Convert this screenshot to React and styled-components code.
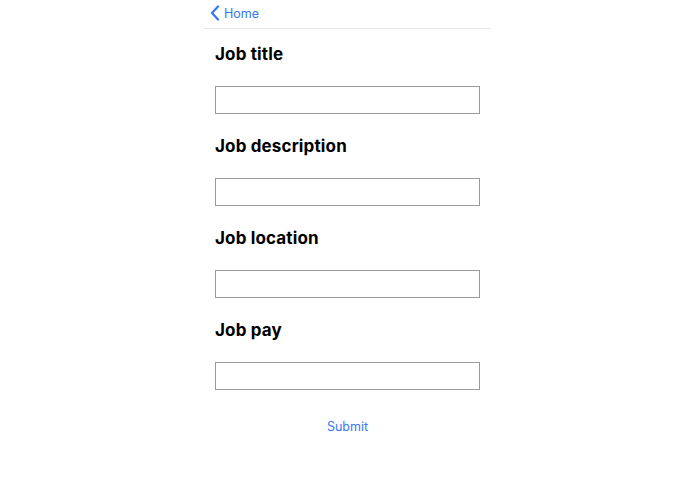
import React from "react";
import styled, { createGlobalStyle } from "styled-components";

const Global = createGlobalStyle`
  html, body { margin: 0; padding: 0; background: #fff; }
  body { font-family: Inter, "Noto Sans", sans-serif; }
`;

const Page = styled.div`
  display: flex;
  justify-content: center;
`;

const Panel = styled.div`
  width: 287px;
  display: flex;
  flex-direction: column;
`;

const Header = styled.div`
  height: 29px;
  box-sizing: border-box;
  border-bottom: 1px solid #e6e6e6;
  display: flex;
  align-items: center;
  padding: 0 0 2px 6px;
`;

const BackLink = styled.a`
  display: flex;
  align-items: center;
  gap: 4px;
  color: #3478f6;
  font-size: 12.5px;
  text-decoration: none;
`;

const Form = styled.form`
  display: flex;
  flex-direction: column;
  padding: 15px 11px 0;
`;

const Label = styled.label`
  font-size: 17px;
  font-weight: 700;
  letter-spacing: 0.15px;
  line-height: 20px;
  color: #000;
  margin-bottom: 22px;
`;

const Input = styled.input`
  height: 28px;
  box-sizing: border-box;
  border: 1px solid #9a9a9a;
  border-radius: 0;
  margin: 0 0 22px;
  width: 265px;
  padding: 0 6px;
  font-family: inherit;
  font-size: 14px;
  outline: none;
`;

const Submit = styled.button`
  align-self: center;
  margin-top: 6px;
  background: none;
  border: none;
  color: #3478f6;
  font-family: inherit;
  font-size: 12.5px;
  line-height: 18px;
  padding: 0;
`;

const fields = ["Job title", "Job description", "Job location", "Job pay"];

export default function App() {
  return (
    <>
      <Global />
      <Page>
        <Panel>
          <Header>
            <BackLink href="#">
              <svg width="10" height="16" viewBox="0 0 10 16">
                <path d="M8 1.5 L2 8 L8 14.5" fill="none" stroke="#3478f6" strokeWidth="2.2" strokeLinecap="round" strokeLinejoin="round" />
              </svg>
              Home
            </BackLink>
          </Header>
          <Form onSubmit={(e) => e.preventDefault()}>
            {fields.map((f) => (
              <React.Fragment key={f}>
                <Label>{f}</Label>
                <Input type="text" />
              </React.Fragment>
            ))}
            <Submit type="submit">Submit</Submit>
          </Form>
        </Panel>
      </Page>
    </>
  );
}
